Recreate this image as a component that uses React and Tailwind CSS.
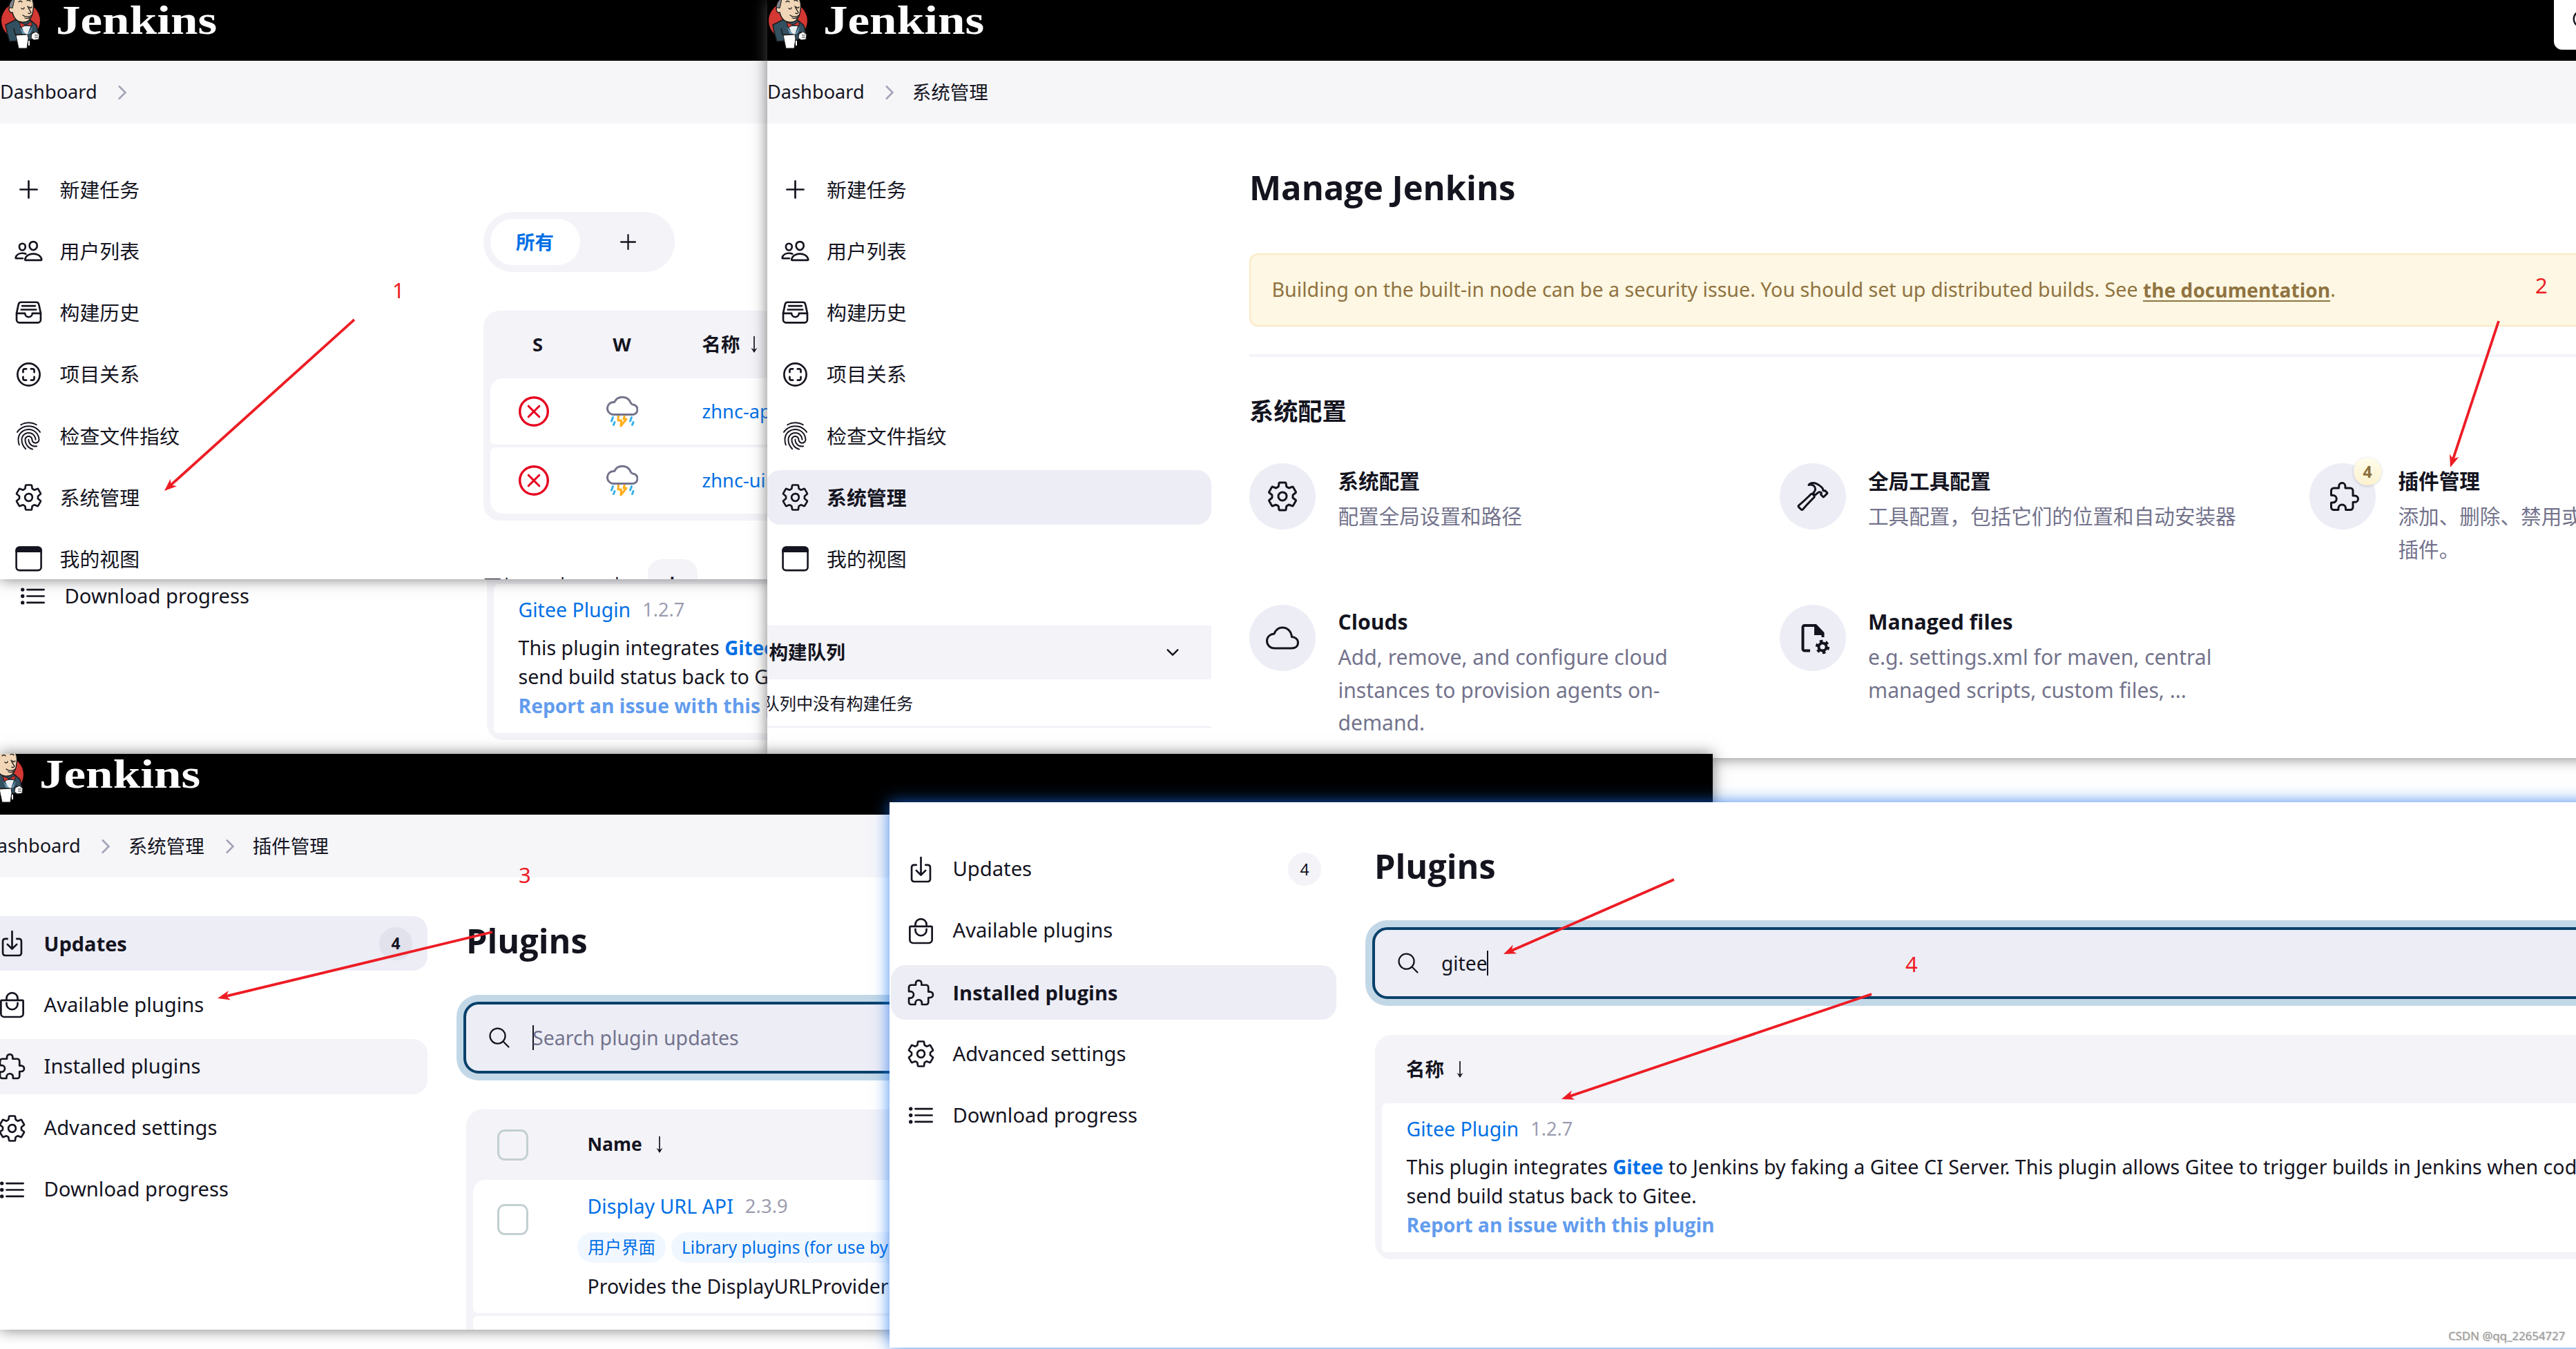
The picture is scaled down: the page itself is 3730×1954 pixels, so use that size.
import React from "react";
import {
  IoAddOutline,
  IoBagHandleOutline,
  IoChevronDown,
  IoCloudOutline,
  IoDownloadOutline,
  IoExtensionPuzzleOutline,
  IoFileTrayFullOutline,
  IoFingerPrintOutline,
  IoHammerOutline,
  IoListOutline,
  IoPeopleOutline,
  IoScanCircleOutline,
  IoSearchOutline,
  IoSettingsOutline,
} from "react-icons/io5";

const BOLD = "font-bold font-['Open_Sans','Noto_Sans_CJK_SC',sans-serif]";

/* ---------- small drawings ---------- */

function Mascot() {
  return (
    <svg className="block h-[74px] w-[60px] shrink-0" viewBox="0 0 60 74">
      <ellipse cx="30" cy="30" rx="28" ry="27" fill="#d33833" />
      <path d="M8 36 L22 29 L44 29 L53 37 L56 50 L48 56 L42 58 L14 60 L11 50 Z" fill="#335061" stroke="#1b1b1b" strokeWidth="1.5" />
      <path d="M18 9 C16 2 18 -8 32 -9 C46 -9 50 2 48 14 C47 25 42 32 35 32 C25 33 20 26 18 18 C14 20 11 12 15 10 Z" fill="#f0d6b7" stroke="#1b1b1b" strokeWidth="1.4" />
      <path d="M21 -2 C16 0 14 4 13 10 C15 12 17 11 18 12 C19 8 20 4 21 -2 Z" fill="#81858a" stroke="#1b1b1b" strokeWidth="1" />
      <path d="M27 3 C28 1 31 1 32 3 M39 1 C41 0 43 0 44 2 M31 12 C33 14 35 13 35 11 M42 10 C43 12 45 12 46 10 M40 9 C41 12 44 16 45 18 C44 20 42 20 41 19 M33 22 C37 25 42 25 46 22 M36 26 C39 27 42 27 44 25" fill="none" stroke="#1b1b1b" strokeWidth="1.3" strokeLinecap="round" />
      <path d="M31 38 L36 50 L40 50 L44 38 Z" fill="#e9eef1" />
      <path d="M29 40 L38 50 L33 50 Z M47 39 L40 50 L44 48 Z" fill="#6d9fbe" />
      <path d="M28 32 L37 36 L46 31 L46 38 L38 36 L30 40 Z" fill="#d33833" stroke="#1b1b1b" strokeWidth="1" />
      <path d="M20 41 L22 50 L38 50 M44 50 L49 46" fill="none" stroke="#1b1b1b" strokeWidth="1.4" />
      <path d="M23 51 L40 50 L41 56 L39 70 L27 70 Z" fill="#ffffff" stroke="#1b1b1b" strokeWidth="1" />
      <path d="M46 49 L52 46 L57 50 L56 57 L49 58 L45 55 Z" fill="#ffffff" stroke="#1b1b1b" strokeWidth="1" />
      <path d="M50 51 h5 M50 54 h5" stroke="#1b1b1b" strokeWidth="0.9" />
      <path d="M41 59 l2 0 l0 7 l-2 0 z" fill="#ffffff" />
    </svg>
  );
}

function ViewIcon({ className }) {
  return (
    <svg className={className} viewBox="0 0 43 43" fill="none">
      <rect x="3.6" y="4.6" width="36" height="33.5" rx="4.5" stroke="#14141f" strokeWidth="2.6" />
      <path d="M2.4 12 V9 a6 6 0 0 1 6 -5.6 H35 a6 6 0 0 1 6 5.6 V12 Z" fill="#14141f" />
    </svg>
  );
}

function FileGearIcon({ className }) {
  return (
    <svg className={className} viewBox="0 0 48 48" fill="none">
      <path d="M20 42.5 H12 a2.5 2.5 0 0 1 -2.5 -2.5 V8.5 a2.5 2.5 0 0 1 2.5 -2.5 H28 L38.5 17 V23" stroke="#14141f" strokeWidth="4" />
      <path d="M26 5 h3 l11 12 v3 h-14 z" fill="#14141f" />
      <circle cx="38" cy="37" r="5.6" stroke="#14141f" strokeWidth="4" />
      <circle cx="38" cy="37" r="8.4" stroke="#14141f" strokeWidth="3.6" strokeDasharray="4.4 4.4" />
    </svg>
  );
}

function SortArrow() {
  return (
    <svg className="block h-[26px] w-[14px] shrink-0" viewBox="0 0 14 26" fill="none">
      <path d="M7 1 V24" stroke="#14141f" strokeWidth="1.7" />
      <path d="M7 25 L2.5 18 L7 20.5 L11.5 18 Z" fill="#14141f" />
    </svg>
  );
}

function Chevron() {
  return (
    <svg className="block h-[22px] w-[14px] shrink-0" viewBox="0 0 14 22" fill="none">
      <path d="M2 1.5 L11.5 11 L2 20.5" stroke="#a3a3b7" strokeWidth="2.6" />
    </svg>
  );
}

function FailedIcon() {
  return (
    <svg className="block size-[44px]" viewBox="0 0 44 44" fill="none" stroke="#e6001f">
      <circle cx="22" cy="22" r="20.3" strokeWidth="3.4" />
      <path d="M14.2 14.2 L29.8 29.8 M29.8 14.2 L14.2 29.8" strokeWidth="3" strokeLinecap="round" />
    </svg>
  );
}

function StormIcon() {
  return (
    <svg className="block h-[46px] w-[46px]" viewBox="0 0 46 46" fill="none">
      <path d="M9.5 27.5 H37.5 a7.3 7.3 0 0 0 0.5 -14.6 C36.5 12.6 36 12.4 35.3 10.5 A13 13 0 0 0 11.5 9.5 A9 9 0 0 0 9.5 27.5 Z" stroke="#73738c" strokeWidth="3" strokeLinejoin="round" />
      <path d="M9.500 31.500 l-2 5.500 M12 38.500 l-1.500 4 M36.500 31.500 l-2 5.500 M39 38.500 l-1.500 4" stroke="#35b1e8" strokeWidth="3" strokeLinecap="round" />
      <path d="M17.500 29 L17 36 H21.500 L21 44 L29 34 H25 L26.500 29" stroke="#ffae1a" strokeWidth="3" strokeLinejoin="round" />
    </svg>
  );
}

/* ---------- shared blocks ---------- */

function TopBar({ logoClass = "" }) {
  return (
    <div className="flex h-[88px] shrink-0 bg-black">
      <div className={`flex ${logoClass}`}>
        <Mascot />
        <div className="ml-[21px] origin-left scale-x-[1.185] font-['Liberation_Serif',serif] text-[60px] leading-[58px] font-bold text-white">Jenkins</div>
      </div>
    </div>
  );
}

function Crumbs({ items, trailing, className = "" }) {
  return (
    <div className="h-[91px] shrink-0 overflow-hidden bg-[#f6f6f9]">
      <div className={`flex h-full items-center ${className}`}>
        {items.map((item, i) => (
          <React.Fragment key={item}>
            <span className={i === 0 ? "text-[27.2px]" : "text-[27.5px]"}>{item}</span>
            {(i < items.length - 1 || trailing) && (
              <span className={i === 0 ? "mr-[26px] ml-[29px]" : "mr-[26px] ml-[30px]"}>
                <Chevron />
              </span>
            )}
          </React.Fragment>
        ))}
      </div>
    </div>
  );
}

function SideItem({ icon: Icon, label, active, hover, count, latin }) {
  return (
    <div className={`flex h-[79.2px] w-[645px] shrink-0 items-center rounded-[21px] pr-[22px] pl-[21.5px] ${active ? "bg-[#ededf6]" : hover ? "bg-[#f3f3f8]" : ""}`}>
      <Icon className="size-[43px] shrink-0" />
      <span className={`grow ${active ? BOLD : ""} ${latin ? (active ? "ml-[25px] text-[29px]" : "ml-[25px] text-[29.2px]") : "ml-[24px] text-[28.9px]"}`}>{label}</span>
      {count && (
        <span className={`flex size-[48px] items-center justify-center rounded-full text-[23px] ${active ? "bg-[#e2e2ec] " + BOLD : "bg-[#f3f3f8]"}`}>{count}</span>
      )}
    </div>
  );
}

const JENKINS_MENU = [
  { icon: IoAddOutline, label: "新建任务" },
  { icon: IoPeopleOutline, label: "用户列表" },
  { icon: IoFileTrayFullOutline, label: "构建历史" },
  { icon: IoScanCircleOutline, label: "项目关系" },
  { icon: IoFingerPrintOutline, label: "检查文件指纹" },
  { icon: IoSettingsOutline, label: "系统管理" },
  { icon: ViewIcon, label: "我的视图" },
];

const PLUGIN_MENU = [
  { icon: IoDownloadOutline, label: "Updates", count: "4" },
  { icon: IoBagHandleOutline, label: "Available plugins" },
  { icon: IoExtensionPuzzleOutline, label: "Installed plugins" },
  { icon: IoSettingsOutline, label: "Advanced settings" },
  { icon: IoListOutline, label: "Download progress" },
];

function SideMenu({ items, active, hover, latin, className = "" }) {
  return (
    <div className={`flex w-[645px] shrink-0 flex-col gap-[10px] ${className}`}>
      {items.map((item) => (
        <SideItem key={item.label} {...item} latin={latin} active={item.label === active} hover={item.label === hover} />
      ))}
    </div>
  );
}

function SearchBox({ children }) {
  return (
    <div className="mt-[59px] -ml-[4px] flex h-[104px] w-[1900px] items-center rounded-[22px] border-4 border-[#07416a] bg-[#ededf6] pl-[30px] shadow-[0_0_0_10px_#c3d8e7]">
      <IoSearchOutline className="size-[36px] shrink-0" />
      {children}
    </div>
  );
}

function GiteeRow() {
  return (
    <div className="h-[216px] rounded-[7px] bg-white pt-[16px] pl-[35.5px] whitespace-nowrap">
      <div className="flex items-center leading-[42px]">
        <span className="text-[28.5px] text-[#006fe6]">Gitee Plugin</span>
        <span className="ml-[17px] text-[27.2px] text-[#9c9cb0]">1.2.7</span>
      </div>
      <div className="mt-[13px] text-[28.6px] leading-[42.2px]">
        This plugin integrates <span className={`text-[27.7px] text-[#006fe6] ${BOLD}`}>Gitee</span> to Jenkins by faking a Gitee CI Server. This plugin allows Gitee to trigger builds in Jenkins when code is pushed
      </div>
      <div className="text-[28.6px] leading-[42.2px]">send build status back to Gitee.</div>
      <div className={`text-[28.3px] leading-[42.2px] text-[#629cee] ${BOLD}`}>Report an issue with this plugin</div>
    </div>
  );
}

/* ---------- windows ---------- */

function DashboardWindow() {
  return (
    <section className="absolute top-0 left-0 h-[839px] w-[1130px] overflow-hidden bg-white">
      <TopBar />
      <Crumbs items={["Dashboard"]} trailing />
      <div className="flex">
        <SideMenu items={JENKINS_MENU} className="-ml-[2px] pt-[56px]" />
        <div className="ml-[56.5px] w-[900px] shrink-0 pt-[128px]">
          <div className="flex h-[87px] w-[277px] items-center rounded-[43px] bg-[#f3f3f8] pl-[10px]">
            <div className={`flex h-[67px] w-[130px] items-center justify-center rounded-[33px] bg-white text-[27.4px] text-[#006fe6] ${BOLD}`}>所有</div>
            <IoAddOutline className="ml-[51px] size-[37px]" />
          </div>
          <div className="mt-[56px] rounded-[24px] bg-[#f3f3f8] p-[10px] pt-0">
            <div className={`grid h-[98px] grid-cols-[120px_124px_1fr] items-center pl-[9px] text-[27.4px] ${BOLD}`}>
              <span className="text-center">S</span>
              <span className="text-center">W</span>
              <span className="flex items-center gap-[14px] pl-[54px]">
                名称 <SortArrow />
              </span>
            </div>
            <div className="flex flex-col gap-[4px]">
              {["zhnc-api", "zhnc-ui"].map((job, i) => (
                <div key={job} className={`grid h-[96px] grid-cols-[120px_136px_1fr] items-center justify-items-center bg-white pl-[3px] text-[27.2px] ${i === 0 ? "rounded-[7px] rounded-t-[18px]" : "rounded-[7px] rounded-b-[18px]"}`}>
                  <FailedIcon />
                  <StormIcon />
                  <span className="justify-self-start pl-[48px] text-[#006fe6]">{job}</span>
                </div>
              ))}
            </div>
          </div>
          <div className="mt-[56px] flex h-[76px] items-center text-[27.4px]">
            <span className="w-[79px] pt-[4px] whitespace-nowrap">图标:</span>
            <span className="flex w-[72px] justify-center pt-[2px]">小</span>
            <span className="ml-[7px] flex w-[72px] justify-center pt-[2px]">中</span>
            <span className={`ml-[8px] flex h-[76px] w-[72px] items-center justify-center rounded-[20px] bg-[#f3f3f8] pt-[2px] ${BOLD}`}>大</span>
          </div>
        </div>
      </div>
    </section>
  );
}

function ProgressWindow() {
  return (
    <section className="absolute top-[800px] left-0 flex h-[400px] w-[1130px] overflow-hidden bg-white">
      <div className="w-[701px] shrink-0 pt-[24px] pl-[4px]">
        <SideItem icon={IoListOutline} label="Download progress" latin />
      </div>
      <div className="ml-[4px] h-[272px] w-[1500px] shrink-0 rounded-b-[24px] bg-[#f3f3f8] px-[10px] pt-[46px]">
        <GiteeRow />
      </div>
    </section>
  );
}

function Tile({ icon: Icon, title, lines, badge, latin }) {
  return (
    <div className="flex h-[205px]">
      <div className="relative flex size-[96px] shrink-0 items-center justify-center rounded-full bg-[#ededf6]">
        <Icon className={`size-[48px] ${badge ? "ml-[5px]" : ""}`} />
        {badge && (
          <span className={`absolute -top-[8px] left-[64px] flex size-[40px] items-center justify-center rounded-full bg-linear-to-b from-[#fffdec] to-[#fbf1cd] text-[23px] text-[#8b6f3d] shadow-[0_1px_4px_rgba(0,0,0,0.18)] ${BOLD}`}>{badge}</span>
        )}
      </div>
      <div className="ml-[32.5px] whitespace-nowrap">
        <div className={`${latin ? "pt-px text-[30.2px]" : "pt-[2px] text-[29.6px]"} leading-[48px] ${BOLD}`}>{title}</div>
        <div className={`leading-[47.6px] text-[#73738c] ${latin ? "mt-[3px] text-[30.1px]" : "mt-[3px] text-[29.6px]"}`}>
          {lines.map((l) => (
            <div key={l}>{l}</div>
          ))}
        </div>
      </div>
    </div>
  );
}

function ManageWindow() {
  return (
    <section className="absolute top-0 left-[1111px] h-[1098px] w-[2660px] bg-white shadow-[0_0_20px_rgba(90,90,90,0.8)]">
      <div className="h-full overflow-hidden">
        <div className="relative">
          <TopBar />
          <div className="absolute top-[-20px] left-[2587px] flex h-[92px] w-[400px] items-center rounded-[12px] bg-white pt-[8px] pl-[24px]">
            <IoSearchOutline className="size-[38px]" />
          </div>
        </div>
        <Crumbs items={["Dashboard", "系统管理"]} />
        <div className="flex">
          <div className="w-[645px] shrink-0 -ml-[2.5px]">
            <SideMenu items={JENKINS_MENU} active="系统管理" className="pt-[56px]" />
            <div className={`mt-[56.5px] flex h-[78px] w-[645px] items-center justify-between bg-[#f3f3f8] pr-[43px] pl-[5px] text-[27.6px] ${BOLD}`}>
              构建队列
              <IoChevronDown className="size-[26px]" />
            </div>
            <div className="h-[70px] w-[645px] border-b-2 border-[#efeff5] -indent-[4px] text-[24.2px] leading-[70px]">队列中没有构建任务</div>
          </div>
          <div className="ml-[55.5px] w-[2400px] shrink-0 pt-[62px]">
            <h1 className={`text-[48.9px] leading-[60px] ${BOLD}`}>Manage Jenkins</h1>
            <div className="mt-[66px] flex h-[105.5px] items-center rounded-[12px] border-2 border-[#fae9c4] bg-[#fdf7e3] pl-[30.5px] text-[28.65px] whitespace-pre text-[#8f7340]">
              {"Building on the built-in node can be a security issue. You should set up distributed builds. See "}
              <span className={`text-[28.1px] underline decoration-2 underline-offset-[4px] ${BOLD}`}>the documentation</span>.
            </div>
            <div className="mt-[40.5px] h-[4px] bg-[#f3f3f8]" />
            <h2 className={`mt-[58px] text-[35.2px] leading-[40px] ${BOLD}`}>系统配置</h2>
            <div className="mt-[56px] grid grid-cols-[767.5px_767.5px_767.5px]">
              <Tile icon={IoSettingsOutline} title="系统配置" lines={["配置全局设置和路径"]} />
              <Tile icon={IoHammerOutline} title="全局工具配置" lines={["工具配置，包括它们的位置和自动安装器"]} />
              <Tile icon={IoExtensionPuzzleOutline} title="插件管理" lines={["添加、删除、禁用或启用", "插件。"]} badge="4" />
              <Tile icon={IoCloudOutline} title="Clouds" lines={["Add, remove, and configure cloud", "instances to provision agents on-", "demand."]} latin />
              <Tile icon={FileGearIcon} title="Managed files" lines={["e.g. settings.xml for maven, central", "managed scripts, custom files, ..."]} latin />
            </div>
          </div>
        </div>
      </div>
    </section>
  );
}

function Checkbox({ className = "bg-white" }) {
  return <span className={`block size-[45px] shrink-0 rounded-[11px] border-[3.5px] border-[#c3cfd1] ${className}`} />;
}

function UpdatesWindow() {
  return (
    <section className="absolute top-[1092px] left-0 h-[834px] w-[2480px] bg-white shadow-[0_0_20px_rgba(90,90,90,0.8)]">
      <div className="h-full overflow-hidden">
        <TopBar logoClass="-ml-[24px]" />
        <Crumbs items={["Dashboard", "系统管理", "插件管理"]} className="-ml-[24px]" />
        <div className="flex">
          <SideMenu items={PLUGIN_MENU} active="Updates" hover="Installed plugins" latin className="-ml-[26px] pt-[56px]" />
          <div className="ml-[56px] w-[1900px] shrink-0 pt-[61px]">
            <h1 className={`text-[48.6px] leading-[60px] ${BOLD}`}>Plugins</h1>
            <SearchBox>
              <span className="ml-[30px] h-[36px] w-[2px] bg-[#14141f]" />
              <span className="-ml-[2px] text-[28.5px] text-[#73738c]">Search plugin updates</span>
            </SearchBox>
            <div className="mt-[52px] rounded-[24px] bg-[#f3f3f8] px-[10px]">
              <div className={`flex h-[102px] items-center pl-[35px] text-[26.5px] ${BOLD}`}>
                <Checkbox className="bg-[#f3f3f8]" />
                <span className="mr-[18px] ml-[85.5px]">Name</span>
                <SortArrow />
              </div>
              <div className="flex h-[193px] rounded-[7px] rounded-t-[18px] bg-white pl-[35px] whitespace-nowrap">
                <Checkbox className="mt-[35px] bg-white" />
                <div className="ml-[85.5px] pt-[17px]">
                  <div className="flex items-center leading-[42px]">
                    <span className="text-[28.6px] text-[#006fe6]">Display URL API</span>
                    <span className="ml-[17px] text-[27.5px] text-[#9c9cb0]">2.3.9</span>
                  </div>
                  <div className="mt-[17px] -ml-[14.5px] flex gap-[8px] text-[24.5px] leading-[44px] text-[#006fe6]">
                    <span className="rounded-full bg-[#f1f7ff] px-[15px]">用户界面</span>
                    <span className="rounded-full bg-[#f1f7ff] px-[15px]">Library plugins (for use by other plugins)</span>
                  </div>
                  <div className="mt-[13px] text-[28.5px] leading-[42px]">Provides the DisplayURLProvider</div>
                </div>
              </div>
              <div className="mt-[4px] h-[120px] rounded-[7px] bg-white" />
            </div>
          </div>
        </div>
      </div>
    </section>
  );
}

function InstalledWindow() {
  return (
    <section className="absolute top-[1162px] left-[1288px] h-[790px] w-[2500px] bg-white shadow-[0_0_22px_rgba(20,110,235,0.8)]">
      <div className="flex h-full overflow-hidden">
        <SideMenu items={PLUGIN_MENU} active="Installed plugins" latin className="ml-[2px] pt-[57.5px]" />
        <div className="ml-[56px] w-[1900px] shrink-0 pt-[62px]">
          <h1 className={`-ml-[1px] text-[48.6px] leading-[60px] ${BOLD}`}>Plugins</h1>
          <SearchBox>
            <span className="ml-[30px] text-[28.2px]">gitee</span>
            <span className="-ml-[1px] h-[36px] w-[2px] bg-[#14141f]" />
          </SearchBox>
          <div className="mt-[52px] rounded-[24px] bg-[#f3f3f8] px-[10px] pb-[10px]">
            <div className={`flex h-[99px] items-center gap-[16px] pl-[35px] text-[27.4px] ${BOLD}`}>
              名称
              <SortArrow />
            </div>
            <GiteeRow />
          </div>
        </div>
      </div>
    </section>
  );
}

/* ---------- annotations drawn over the windows ---------- */

const ARROWS = [
  [513, 463, 238, 711],
  [3618, 465, 3548, 677],
  [713, 1350, 315, 1446],
  [2424, 1274, 2177, 1382],
  [2710, 1440, 2261, 1592],
];

function Arrow({ points: [x1, y1, x2, y2] }) {
  const d = Math.hypot(x2 - x1, y2 - y1);
  const ux = (x2 - x1) / d;
  const uy = (y2 - y1) / d;
  const at = (back, side) => `${x2 - ux * back - uy * side},${y2 - uy * back + ux * side}`;
  return (
    <g>
      <line x1={x1} y1={y1} x2={x2 - ux * 12} y2={y2 - uy * 12} stroke="#ed1c24" strokeWidth="3.8" />
      <polygon points={`${at(0, 0)} ${at(18, 7)} ${at(13, 0)} ${at(18, -7)}`} fill="#ed1c24" />
    </g>
  );
}

function Annotations() {
  return (
    <>
      <svg className="pointer-events-none absolute inset-0 h-[1954px] w-[3730px]" viewBox="0 0 3730 1954">
        {ARROWS.map((p) => (
          <Arrow key={p.join()} points={p} />
        ))}
      </svg>
      <span className="absolute top-[399px] left-[568px] text-[31px] leading-[42px] text-[#ed1c24]">1</span>
      <span className="absolute top-[392px] left-[3671px] text-[31px] leading-[42px] text-[#ed1c24]">2</span>
      <span className="absolute top-[1246px] left-[751px] text-[31px] leading-[42px] text-[#ed1c24]">3</span>
      <span className="absolute top-[1375px] left-[2759px] text-[31px] leading-[42px] text-[#ed1c24]">4</span>
      <span className="absolute top-[1922px] left-[3545px] text-[16.8px] leading-[26px] text-[#9b9b9b] [text-shadow:1px_1px_1px_rgba(0,0,0,0.2)]">CSDN @qq_22654727</span>
    </>
  );
}

export default function App() {
  return (
    <main className="relative h-[1954px] w-[3730px] overflow-hidden bg-white font-['Noto_Sans','Noto_Sans_CJK_SC',sans-serif] text-[#14141f]">
      <ProgressWindow />
      <div className="absolute top-0 left-0 h-[839px] w-[1120px] shadow-[0_0_20px_rgba(90,90,90,0.8)]" />
      <DashboardWindow />
      <ManageWindow />
      <UpdatesWindow />
      <InstalledWindow />
      <Annotations />
    </main>
  );
}
